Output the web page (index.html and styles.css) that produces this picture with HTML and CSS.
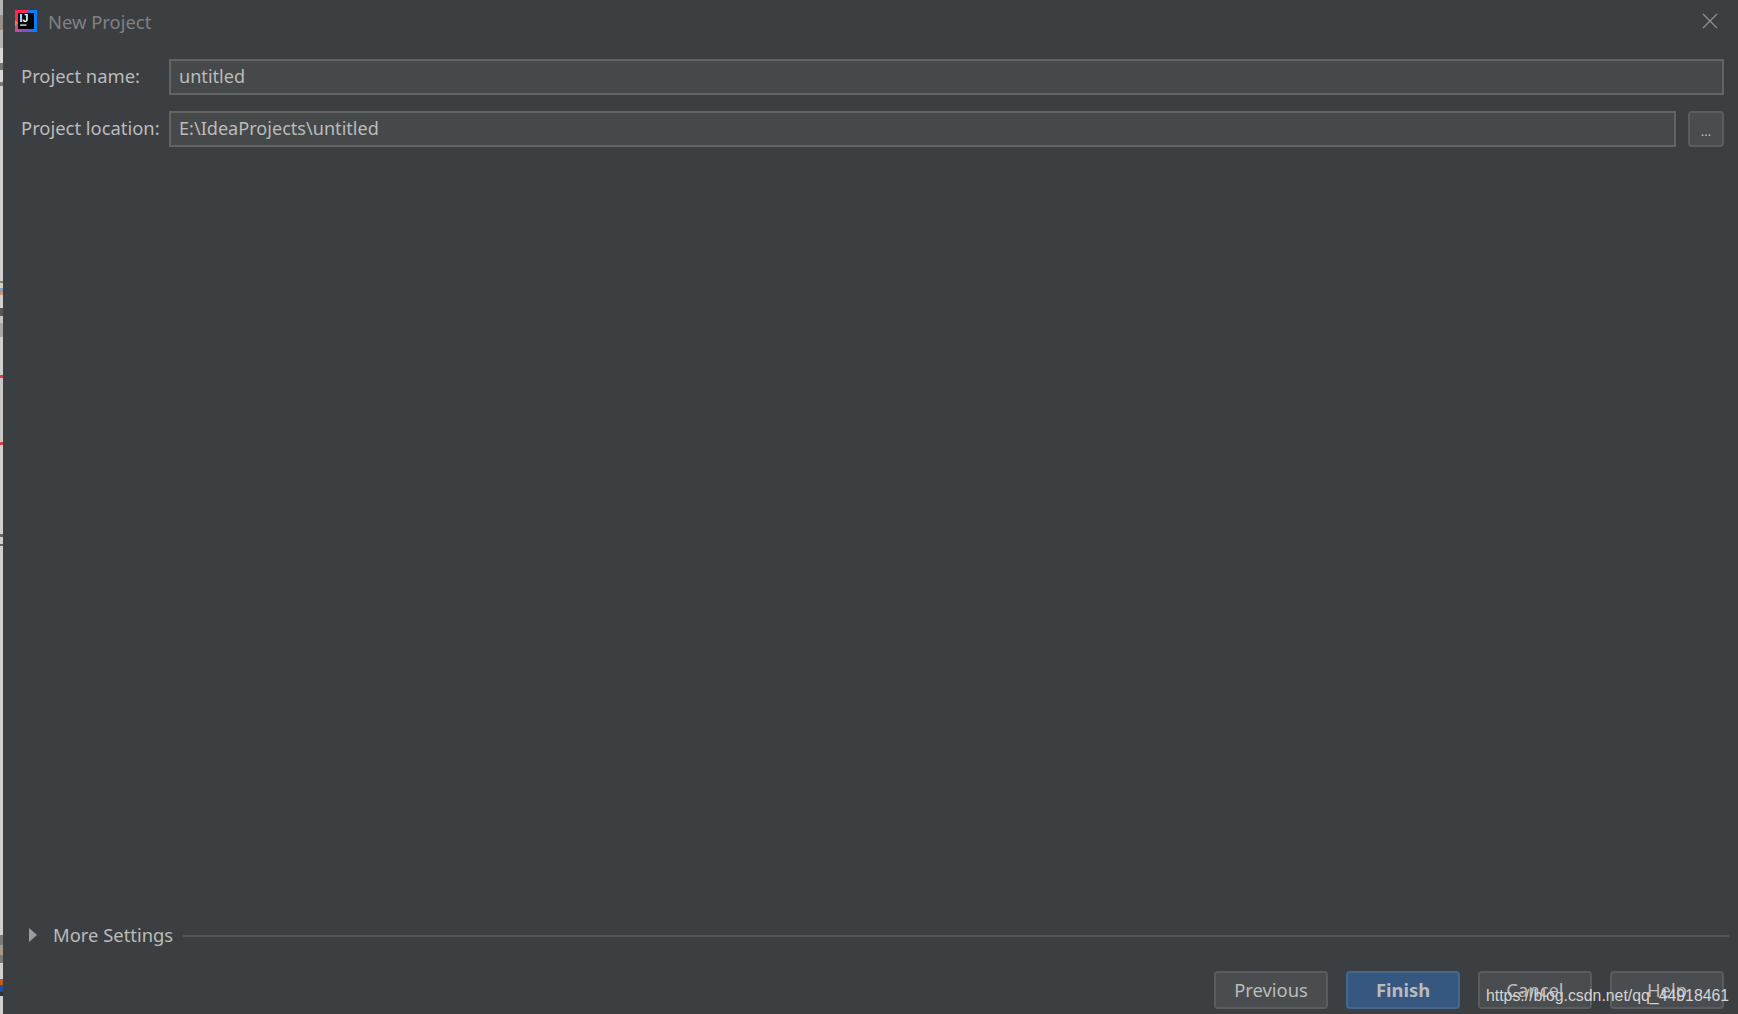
FILE: index.html
```html
<!DOCTYPE html>
<html lang="en">
<head>
<meta charset="utf-8">
<title>New Project</title>
<link rel="stylesheet" href="styles.css">
</head>
<body>
<div class="strip"></div>
<main class="dialog">
  <header class="titlebar">
    <svg class="logo" width="22" height="22" viewBox="0 0 22 22">
      <rect width="22" height="22" fill="#087cfa"/>
      <polygon points="0,0 14,0 6,11 0,16" fill="#fe2857"/>
      <polygon points="0,10 8,18 6,22 0,22" fill="#fc801d"/>
      <polygon points="0,22 0,16 10,6 16,22" fill="#a83fc0" opacity="0.75"/>
      <rect x="3" y="3" width="16" height="16" fill="#000"/>
      <text class="logo-text" x="4.5" y="12">IJ</text>
      <rect x="5" y="14.5" width="6.5" height="1.2" fill="#fff"/>
    </svg>
    <span class="title">New Project</span>
    <svg class="close" width="16" height="16" viewBox="0 0 16 16"><path d="M1 1 15 15M15 1 1 15" stroke="#8c8e90" stroke-width="1.4" fill="none"/></svg>
  </header>
  <section class="form">
    <div class="row">
      <label class="label">Project name:</label>
      <div class="field">untitled</div>
    </div>
    <div class="row">
      <label class="label">Project location:</label>
      <div class="field">E:\IdeaProjects\untitled</div>
      <button class="btn browse"><span class="dots">...</span></button>
    </div>
  </section>
  <div class="more">
    <svg class="arrow" width="8" height="14" viewBox="0 0 8 14"><polygon points="0,0 8,7 0,14" fill="#9a9c9e"/></svg>
    <span class="more-label">More Settings</span>
    <span class="rule"></span>
  </div>
  <footer class="actions">
    <button class="btn">Previous</button>
    <button class="btn primary">Finish</button>
    <button class="btn">Cancel</button>
    <button class="btn">Help</button>
  </footer>
</main>
<div class="watermark">https://blog.csdn.net/qq_44918461</div>
</body>
</html>
```

FILE: styles.css
```css
* { box-sizing: border-box; }
html, body { margin: 0; height: 100%; overflow: hidden; }
body {
  display: flex;
  background: #3c3f41;
  font-family: "Noto Sans", "Open Sans", sans-serif;
  color: #bbbbbb;
  font-size: 18.4px;
}
.strip {
  width: 3px;
  flex: none;
  background: linear-gradient(to bottom,
    #b4b4b4 0 15px, #9a8f84 15px 30px, #b4b4b4 30px 48px,
    #d8d8d8 48px 63px, #777777 63px 70px, #d8d8d8 70px 82px, #777777 82px 86px,
    #d0d0d0 86px 281px, #9a7a5a 281px 283px, #d0d0d0 283px 288px,
    #8a9cc0 288px 292px, #c89a70 292px 295px, #d0d0d0 295px 308px,
    #555555 308px 316px, #c4c4c4 316px 323px, #a8a8a8 323px 337px,
    #d0d0d0 337px 375px, #d84040 375px 378px, #c8c8c8 378px 442px,
    #d84040 442px 445px, #d0d0d0 445px 534px, #666666 534px 537px,
    #d0d0d0 537px 544px, #666666 544px 546px, #d0d0d0 546px 935px,
    #7a7a7a 935px 945px, #a89888 945px 955px, #7a7a7a 955px 963px,
    #d0d0d0 963px 979px, #c85a20 979px 985px, #2050a0 985px 992px, #333333 992px 996px,
    #d0d0d0 996px);
}
.dialog { flex: 1; display: flex; flex-direction: column; min-width: 0; }
.titlebar {
  height: 43px;
  display: flex;
  align-items: center;
  padding: 0 20px 0 12px;
}
.logo { flex: none; margin-top: -1px; }
.logo-text { font: bold 10.5px "Liberation Sans", sans-serif; fill: #fff; }
.title { margin-left: 11px; color: #7f8285; }
.close { margin-left: auto; margin-top: -2px; }
.form {
  display: flex;
  flex-direction: column;
  gap: 16px;
  padding: 16px 14px 0 18px;
}
.row { display: flex; align-items: center; height: 36px; }
.label { width: 148px; flex: none; padding-bottom: 4px; }
.field {
  flex: 1;
  height: 36px;
  line-height: 30px;
  padding-left: 8px;
  font-size: 18.1px;
  background: #45494a;
  border: 2px solid #646464;
}
.btn {
  width: 114px;
  height: 38px;
  padding: 0 0 2px;
  background: #4a4d4f;
  border: 2px solid #5a5c5e;
  border-radius: 4px;
  color: #bbbbbb;
  font: inherit;
}
.browse { width: 36px; height: 36px; margin-left: 12px; }
.dots { font-size: 13px; }
.more {
  margin-top: auto;
  display: flex;
  align-items: center;
  height: 30px;
  padding-left: 26px;
  margin-bottom: 20px;
}
.arrow { flex: none; margin-top: -2px; }
.more-label { margin-left: 16px; margin-top: -3px; }
.rule { flex: 1; height: 2px; background: #545658; margin: 0 9px 0 10px; }
.actions {
  display: flex;
  justify-content: flex-end;
  gap: 18px;
  padding-right: 14px;
  margin-bottom: 5px;
}
.primary {
  background: #365880;
  border-color: #43688c;
  font-weight: 700;
}
.watermark {
  position: absolute;
  left: 1486px;
  top: 987px;
  font: 15.85px "Liberation Sans", sans-serif;
  color: #d4d4d4;
  white-space: nowrap;
}
```
